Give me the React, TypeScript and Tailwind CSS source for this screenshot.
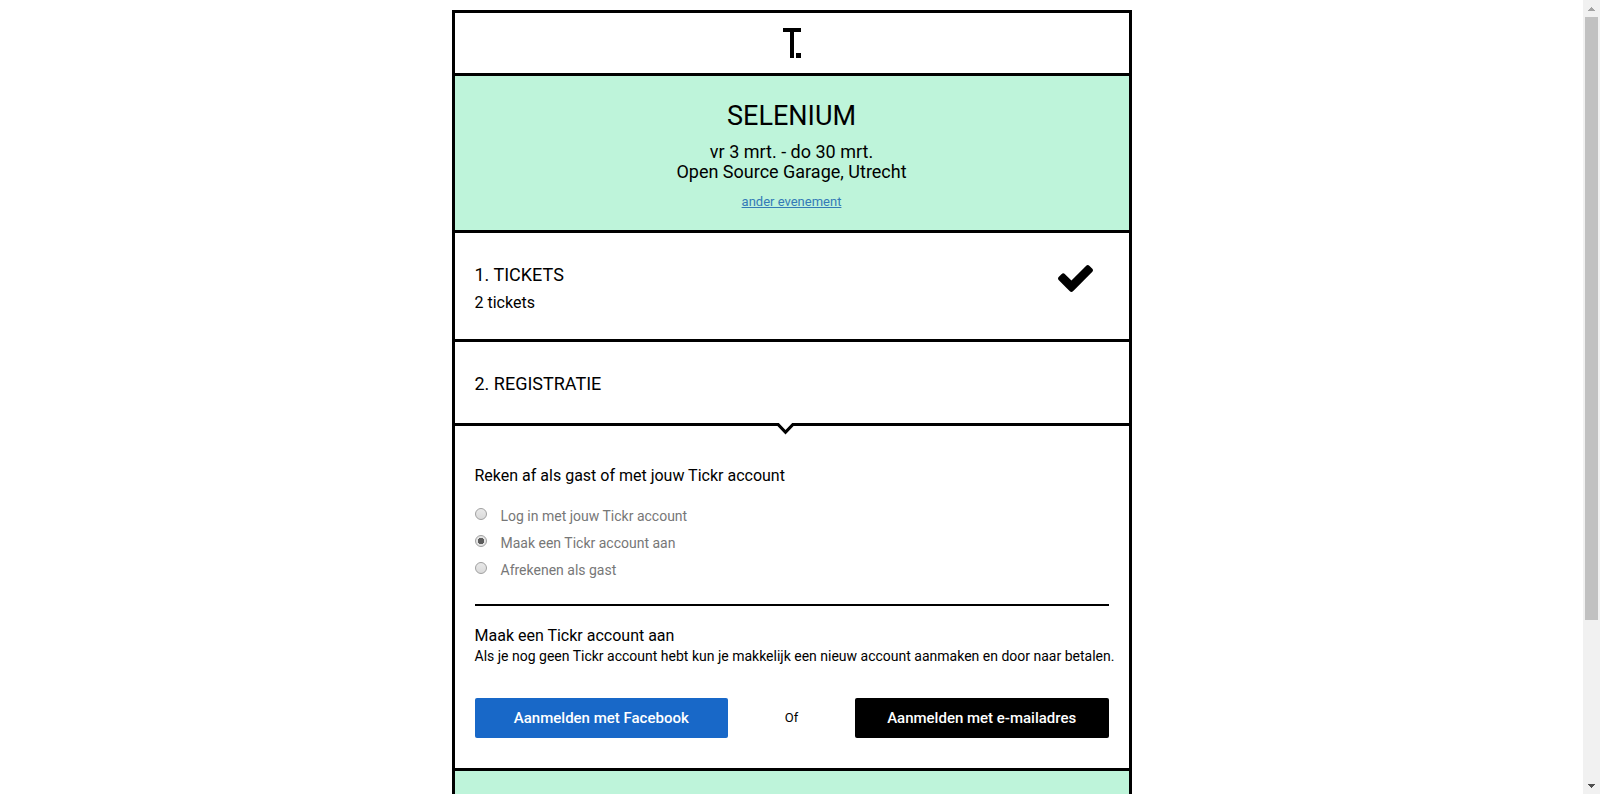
import { useState } from "react";

const options = [
  { id: "login", label: "Log in met jouw Tickr account" },
  { id: "create", label: "Maak een Tickr account aan" },
  { id: "guest", label: "Afrekenen als gast" },
];

function Logo() {
  return (
    <svg width="18" height="30" viewBox="0 0 18 30" role="img" aria-label="Tickr">
      <path d="M0 0h18v4h-7v26H7V4H0zM13 25h5v5h-5z" />
    </svg>
  );
}

function Check() {
  return (
    <svg width="35" height="27" viewBox="121 334 1550 1188" aria-hidden="true">
      <path d="M1671 566q0 40-28 68l-724 724-136 136q-28 28-68 28t-68-28l-136-136-362-362q-28-28-28-68t28-68l136-136q28-28 68-28t68 28l294 295 656-657q28-28 68-28t68 28l136 136q28 28 28 68z" />
    </svg>
  );
}

function Notch() {
  return (
    <svg className="absolute -top-[3px] left-1/2 -ml-4" width="19" height="12" viewBox="0 0 19 12" aria-hidden="true">
      <path d="M2 0H17L9.5 8z" fill="#fff" />
      <path d="M0 0H2.8L9.5 7L16.2 0H19V1.5L9.5 11.5L0 1.5z" />
    </svg>
  );
}

function Scrollbar() {
  return (
    <div className="flex w-[17px] shrink-0 flex-col items-center bg-[#f1f1f1]" aria-hidden="true">
      <div className="flex h-[17px] shrink-0 items-center">
        <svg width="7" height="4" viewBox="0 0 7 4" fill="#a3a3a3" shapeRendering="crispEdges">
          <path d="M3 0h1v1h1v1h1v1h1v1H0V3h1V2h1V1h1z" />
        </svg>
      </div>
      <div className="w-[13px] grow-[603] basis-0 bg-[#c1c1c1]" />
      <div className="grow-[157] basis-0" />
      <div className="flex h-[17px] shrink-0 items-center">
        <svg width="7" height="4" viewBox="0 0 7 4" fill="#505050" shapeRendering="crispEdges">
          <path d="M0 0h7v1H6v1H5v1H4v1H3V3H2V2H1V1H0z" />
        </svg>
      </div>
    </div>
  );
}

export default function App() {
  const [choice, setChoice] = useState("create");

  return (
    <div className="flex h-screen bg-white font-['Roboto',sans-serif] text-black">
      <main className="min-w-0 flex-1 overflow-hidden pt-[10px]">
        <div className="mx-auto max-w-[680px] divide-y-[3px] divide-black border-[3px] border-black">
          <header className="flex h-[63px] items-center justify-center">
            <Logo />
          </header>

          <section className="bg-[#bef4da] pt-[22px] pb-[18px] text-center">
            <h1 className="text-[27px] leading-9">SELENIUM</h1>
            <p className="mt-2 text-lg leading-5">
              vr 3 mrt. - do 30 mrt.
              <br />
              Open Source Garage, Utrecht
            </p>
            <p className="mt-[10px] text-[13px] leading-5">
              <a href="#evenementen" className="text-[#337ab7] underline">ander evenement</a>
            </p>
          </section>

          <section className="flex justify-between px-5 pt-[30px] pb-6">
            <div>
              <h2 className="text-lg leading-6">1. TICKETS</h2>
              <p className="mt-1 text-base leading-6">2 tickets</p>
            </div>
            <div className="pt-[2px] pr-4">
              <Check />
            </div>
          </section>

          <section className="px-5 pt-[30px] pb-[27px]">
            <h2 className="text-lg leading-6">2. REGISTRATIE</h2>
          </section>

          <section className="relative px-5 pt-[38px] pb-[30px]">
            <Notch />
            <fieldset>
              <legend className="text-base leading-6">Reken af als gast of met jouw Tickr account</legend>
              <div className="mt-[14px]">
                {options.map(({ id, label }) => (
                  <label key={id} className="flex h-[27px] items-center gap-[14px] text-sm text-[#777]">
                    <input
                      type="radio"
                      name="account"
                      value={id}
                      checked={choice === id}
                      onChange={() => setChoice(id)}
                      className="mb-1 size-3 appearance-none rounded-full border border-[#a0a0a0] bg-linear-to-b from-[#e9e9e9] to-[#dadada] checked:bg-[radial-gradient(circle,#5c5c5c_0_3px,#e4e4e4_3.5px)]"
                    />
                    {label}
                  </label>
                ))}
              </div>
            </fieldset>

            <hr className="mt-[21px] border-t-2 border-black" />

            <h3 className="mt-5 text-base leading-5">Maak een Tickr account aan</h3>
            <p className="text-sm leading-5 md:whitespace-nowrap">
              Als je nog geen Tickr account hebt kun je makkelijk een nieuw account aanmaken en door naar betalen.
            </p>

            <div className="mt-8 grid grid-cols-[2fr_1fr_2fr] items-center">
              <button type="button" className="h-10 rounded-[2px] bg-[#1868c8] text-[15px] font-medium text-white">
                Aanmelden met Facebook
              </button>
              <span className="text-center text-[13px]">Of</span>
              <button type="button" className="h-10 rounded-[2px] bg-black text-[15px] font-medium text-white">
                Aanmelden met e-mailadres
              </button>
            </div>
          </section>

          <section className="h-32 bg-[#bef4da]" />
        </div>
      </main>
      <Scrollbar />
    </div>
  );
}
